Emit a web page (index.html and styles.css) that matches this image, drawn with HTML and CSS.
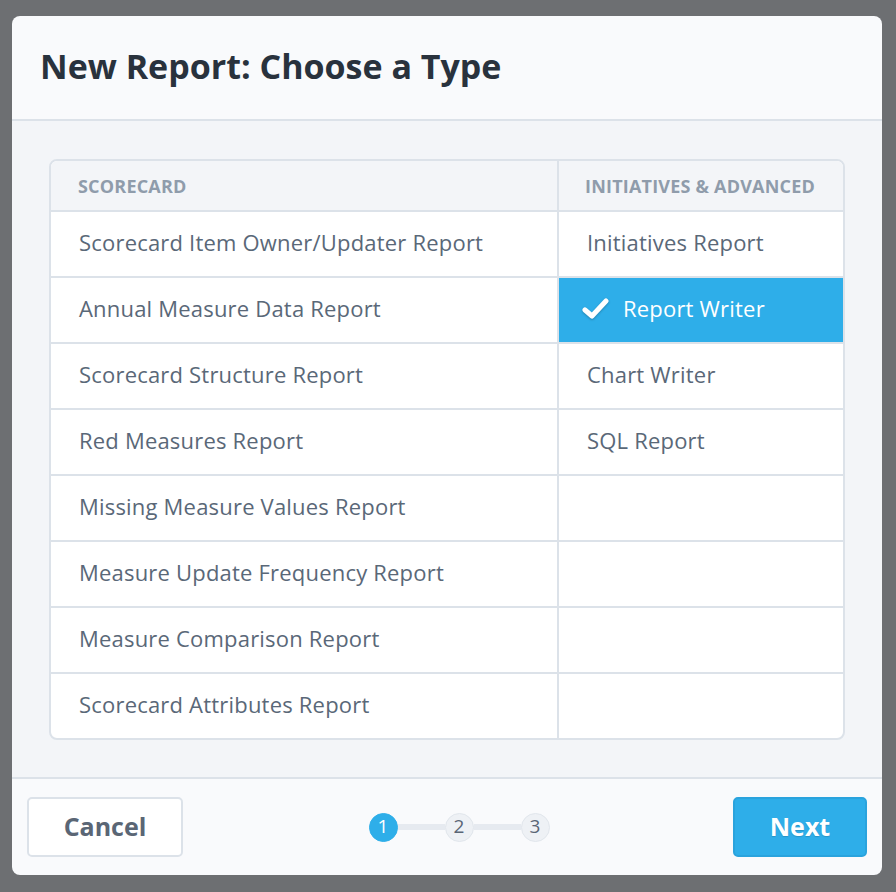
FILE: index.html
```html
<!DOCTYPE html>
<html>
<head>
<meta charset="utf-8" />
<link rel="stylesheet" href="styles.css">
</head>
<body>
<div class="modal">
  <header class="modal-head">
    <h1>New Report: Choose a Type</h1>
  </header>
  <section class="modal-body">
    <div class="types">
      <div class="col col-left">
        <div class="cell cell-head">Scorecard</div>
        <div class="cell">Scorecard Item Owner/Updater Report</div>
        <div class="cell">Annual Measure Data Report</div>
        <div class="cell">Scorecard Structure Report</div>
        <div class="cell">Red Measures Report</div>
        <div class="cell">Missing Measure Values Report</div>
        <div class="cell">Measure Update Frequency Report</div>
        <div class="cell">Measure Comparison Report</div>
        <div class="cell">Scorecard Attributes Report</div>
      </div>
      <div class="col col-right">
        <div class="cell cell-head">Initiatives &amp; Advanced</div>
        <div class="cell">Initiatives Report</div>
        <div class="cell selected">
          <svg class="check" width="30" height="26" viewBox="0 0 30 26"><path d="M4 14 L11 20 L25 5" fill="none" stroke="#fff" stroke-width="5" stroke-linecap="round" stroke-linejoin="round"/></svg>
          Report Writer
        </div>
        <div class="cell">Chart Writer</div>
        <div class="cell">SQL Report</div>
        <div class="cell"></div>
        <div class="cell"></div>
        <div class="cell"></div>
        <div class="cell"></div>
      </div>
    </div>
  </section>
  <footer class="modal-foot">
    <a href="#" class="btn btn-default">Cancel</a>
    <div class="steps">
      <span class="step active">1</span>
      <span class="step-line"></span>
      <span class="step">2</span>
      <span class="step-line"></span>
      <span class="step">3</span>
    </div>
    <a href="#" class="btn btn-primary">Next</a>
  </footer>
</div>
</body>
</html>
```

FILE: styles.css
```css
:root {--blue: #2eaee9; --border: #dce2e9; --text: #5a6878; --muted: #8f9cab;}
body {margin: 0; background: #6d6f72; font-family: 'Open Sans', 'Noto Sans', sans-serif; height: 892px;}
a {text-decoration: none;}
.modal {position: relative; margin: 16px 0 0 12px; width: 870px; height: 859px; background: #f9fafc; border-radius: 8px; overflow: hidden; display: flex; flex-direction: column;}
.modal-head {height: 105px; box-sizing: border-box; padding: 0 0 4px 28px; border-bottom: 2px solid var(--border); display: flex; align-items: center;}
.modal-head h1 {margin: 0; font-size: 34px; font-weight: 700; color: #29323d;}
.modal-body {background: #f3f5f8; padding: 38px 37px 37px; border-bottom: 2px solid var(--border);}
.types {display: flex; background: #fff; border: 2px solid var(--border); border-radius: 8px; overflow: hidden;}
.col {display: flex; flex-direction: column;}
.col-left {width: 506px; border-right: 2px solid var(--border);}
.col-right {flex: 1;}
.cell {box-sizing: border-box; height: 66px; padding: 0 0 5px 28px; border-top: 2px solid var(--border); display: flex; align-items: center; font-size: 22px; letter-spacing: 0.2px; color: var(--text);}
.cell-head {height: 49px; padding-bottom: 0; border-top: 0; background: #f3f5f8; text-transform: uppercase; font-size: 18px; letter-spacing: 0.2px; font-weight: 700; color: var(--muted); padding-left: 27px;}
.col-right .cell-head {padding-left: 26px;}
.cell.selected {background: var(--blue); color: #fff; padding-left: 22px;}
.check {margin: 3px 12px 0 0; filter: drop-shadow(0 1px 1px rgba(0,0,0,0.25));}
.modal-foot {flex: 1; display: flex; align-items: center; justify-content: space-between; padding: 0 15px;}
.btn {display: flex; align-items: center; justify-content: center; box-sizing: border-box; height: 60px; padding-bottom: 3px; border-radius: 5px; font-size: 25px; font-weight: 700;}
.btn-default {width: 156px; background: #fff; border: 2px solid var(--border); color: #5a6675;}
.btn-primary {width: 134px; background: var(--blue); border: 2px solid #2aa3dd; color: #fff; text-shadow: 0 1px 1px rgba(0,0,0,0.15);}
.steps {display: flex; align-items: center; margin-left: 2px;}
.step {width: 29px; height: 29px; box-sizing: border-box; padding-bottom: 2px; border-radius: 50%; background: #eef1f5; border: 1px solid #e1e6ec; color: #5a6675; font-size: 19px; display: flex; align-items: center; justify-content: center; line-height: 1;}
.step.active {background: var(--blue); border-color: var(--blue); color: #fff;}
.step-line {width: 47px; height: 6px; background: #e6eaf0;}
```
